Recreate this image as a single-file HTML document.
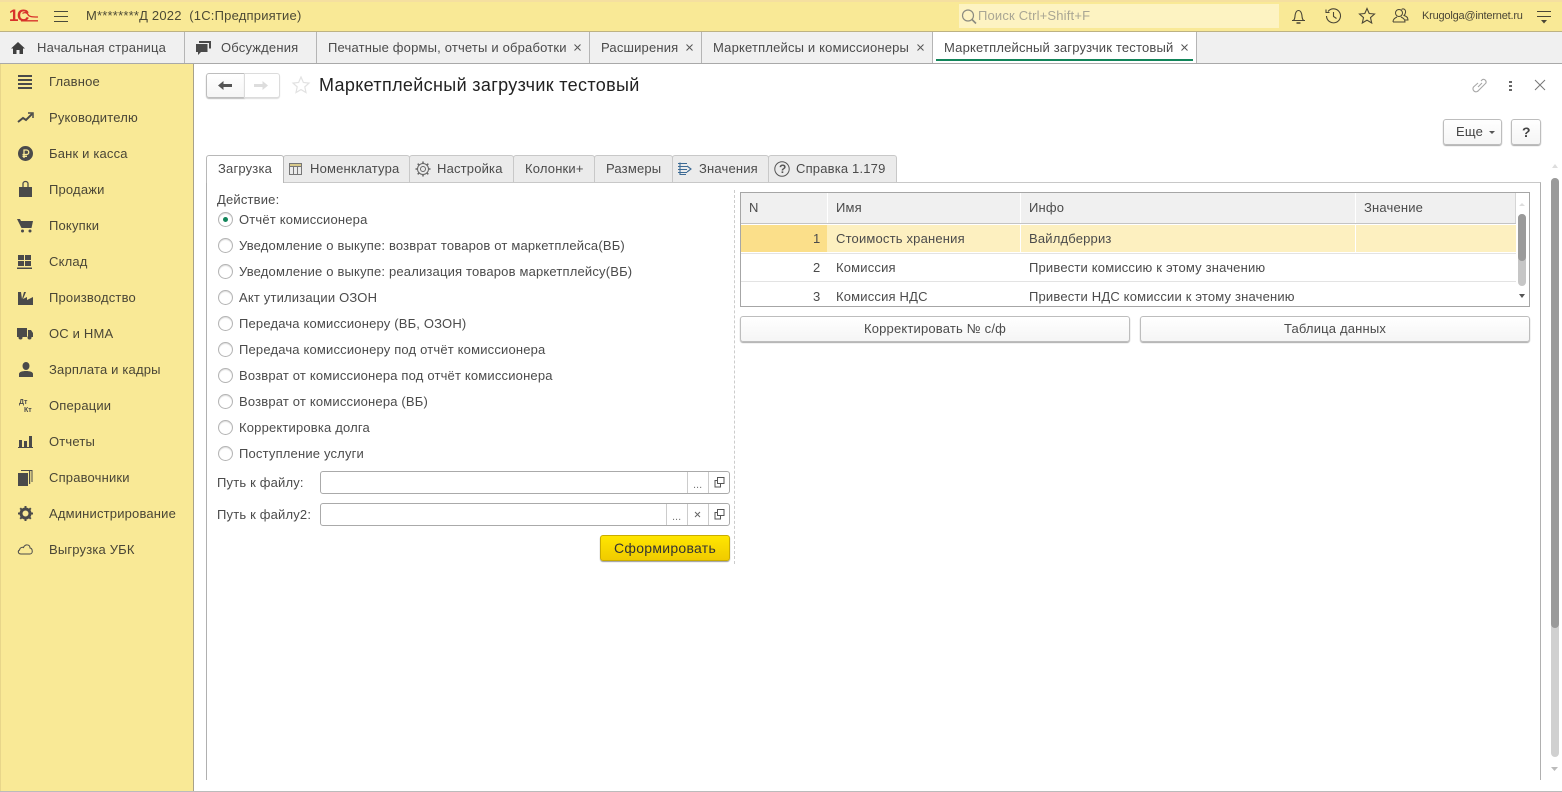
<!DOCTYPE html>
<html><head><meta charset="utf-8">
<style>
html,body{margin:0;padding:0;width:1562px;height:792px;overflow:hidden;background:#fff}
body{position:relative;font-family:"Liberation Sans",sans-serif;font-size:13px;color:#4b4b4b}
.a{position:absolute}
.t{position:absolute;white-space:nowrap;line-height:16px;letter-spacing:.18px}
.b{position:absolute;box-sizing:border-box;border:1px solid #bdbdbd;border-radius:3px;background:linear-gradient(#fff,#f5f5f5);box-shadow:0 1px 1px #aaa}
svg{position:absolute;overflow:visible}
.tab{position:absolute;top:155px;height:27px;box-sizing:border-box;background:#ebebeb;border:1px solid #c8c8c8;border-bottom:none;border-radius:3px 3px 0 0}
.r{position:absolute;left:218px;width:13px;height:13px;border:1px solid #b4b4b4;border-radius:50%;background:#fff;box-shadow:inset 0 1px 1px #ddd}
.vl{position:absolute;width:1px;background:#c9c9c9}
.hl{position:absolute;height:1px;background:#e3e3e3}
</style></head><body>
<!-- top bar -->
<div class="a" style="left:0;top:0;width:1562px;height:32px;background:#f9e996;border-top:2px solid #f5dfa0;box-sizing:border-box;border-bottom:1px solid #bdb283"></div>
<div class="t" style="left:9px;top:6px;font-size:17px;font-weight:bold;color:#d8322a;letter-spacing:-1.500px;line-height:20px">1С</div>
<svg style="left:0;top:0" width="40" height="24" fill="none" stroke="#d8322a" stroke-width="1.300"><path d="M22.500 13.500c2-1.500 4.500-1 5.500 1 .8 2 3 2.500 10 2.500"/><path d="M21 20.800h17"/></svg>
<div class="a" style="left:54px;top:11px;width:14px;height:1px;background:#4a4a3a"></div>
<div class="a" style="left:54px;top:16px;width:14px;height:1px;background:#4a4a3a"></div>
<div class="a" style="left:54px;top:21px;width:14px;height:1px;background:#4a4a3a"></div>
<div class="t" style="left:86px;top:8px;letter-spacing:.2px;color:#4d4a35">М********Д 2022&nbsp; (1С:Предприятие)</div>
<div class="a" style="left:959px;top:4px;width:320px;height:24px;background:#fdf3c2"></div>
<svg style="left:961px;top:9px" width="16" height="16" fill="none" stroke="#8b8b80" stroke-width="1.2"><circle cx="7" cy="6.5" r="5.5"/><path d="M11 10.5l4 4" stroke-width="1.6"/></svg>
<div class="t" style="left:978px;top:8px;color:#a9a694">Поиск Ctrl+Shift+F</div>
<svg style="left:1290px;top:7px" width="18" height="18" fill="none" stroke="#4a4636" stroke-width="1.1"><path d="M2 13.5h13M3.5 13.5c2-2 1-4 2-7 .6-2 2-3 3-3s2.400 1 3 3c1 3 0 5 2 7"/><path d="M6.500 16h4" stroke-width="1.500"/></svg>
<svg style="left:1325px;top:7px" width="18" height="18" fill="none" stroke="#4a4636" stroke-width="1.1"><path d="M3 4.500A7 7 0 1 1 1.500 9"/><path d="M1 2.500v3h3.500M8.500 5v4.500l3 2"/></svg>
<svg style="left:1358px;top:7px" width="18" height="18" fill="none" stroke="#4a4636" stroke-width="1.1"><path d="M9 1.500l2.200 5 5.300.500-4 3.600 1.200 5.400L9 13.200 4.300 16l1.200-5.400-4-3.600 5.300-.500z"/></svg>
<svg style="left:1392px;top:7px" width="18" height="18" fill="none" stroke="#4a4636" stroke-width="1"><circle cx="7" cy="6" r="3.500"/><path d="M1 15c0-3 2-4 4-5M9 10c2 1 4 2 4 5H1M9.500 2.500c2-1.500 4.500 0 4 3-.2 1.500-1 2.500-1.500 3 2 .5 4 2 4 4.500h-3"/></svg>
<div class="t" style="left:1422px;top:8px;font-size:11px;letter-spacing:-.2px;color:#4a4636">Krugolga@internet.ru</div>
<div class="a" style="left:1537px;top:11px;width:14px;height:1px;background:#4a4636"></div>
<div class="a" style="left:1537px;top:16px;width:14px;height:1px;background:#4a4636"></div>
<svg style="left:1541px;top:20px" width="6" height="4"><path d="M0 0h6L3 3.500z" fill="#4a4636"/></svg>
<!-- tabs bar -->
<div class="a" style="left:0;top:32px;width:1562px;height:32px;background:#f0f0f0;box-sizing:border-box;border-bottom:1px solid #a9a9a9"></div>
<div class="vl" style="left:184px;top:32px;height:31px;background:#b5b5b5"></div>
<div class="vl" style="left:316px;top:32px;height:31px;background:#b5b5b5"></div>
<div class="vl" style="left:589px;top:32px;height:31px;background:#b5b5b5"></div>
<div class="vl" style="left:701px;top:32px;height:31px;background:#b5b5b5"></div>
<div class="vl" style="left:932px;top:32px;height:31px;background:#b5b5b5"></div>
<div class="vl" style="left:1196px;top:32px;height:31px;background:#b5b5b5"></div>
<div class="a" style="left:933px;top:32px;width:263px;height:31px;background:#fff"></div>
<div class="a" style="left:936px;top:59px;width:257px;height:2px;background:#12855a"></div>
<svg style="left:11px;top:41px" width="15" height="14"><path d="M7 1L0 7.500h2V13h3.500V9h3v4H12V7.500h2z" fill="#3f3f3f"/></svg>
<div class="t" style="left:37px;top:40px">Начальная страница</div>
<svg style="left:195px;top:40px" width="17" height="16"><path d="M4 1h12v7.500h-2V3H4z" fill="#4a4a4a"/><path d="M1 4h11.500v8H6l-3 3v-3H1z" fill="#4a4a4a"/></svg>
<div class="t" style="left:221px;top:40px">Обсуждения</div>
<div class="t" style="left:328px;top:40px">Печатные формы, отчеты и обработки</div>
<div class="t" style="left:601px;top:40px">Расширения</div>
<div class="t" style="left:713px;top:40px">Маркетплейсы и комиссионеры</div>
<div class="t" style="left:944px;top:40px">Маркетплейсный загрузчик тестовый</div>
<svg style="left:574px;top:44px" width="8" height="8" stroke="#555" fill="none"><path d="M.5.5l6 6m0-6l-6 6"/></svg>
<svg style="left:686px;top:44px" width="8" height="8" stroke="#555" fill="none"><path d="M.5.5l6 6m0-6l-6 6"/></svg>
<svg style="left:917px;top:44px" width="8" height="8" stroke="#555" fill="none"><path d="M.5.5l6 6m0-6l-6 6"/></svg>
<svg style="left:1181px;top:44px" width="8" height="8" stroke="#555" fill="none"><path d="M.5.5l6 6m0-6l-6 6"/></svg>
<!-- sidebar -->
<div class="a" style="left:0;top:64px;width:194px;height:728px;background:#f9e996;box-sizing:border-box;border-right:1px solid #a8a28a;border-left:1px solid #e8d68a"></div>
<div class="t" style="left:49px;top:74px;color:#4a4636">Главное</div>
<div class="t" style="left:49px;top:110px;color:#4a4636">Руководителю</div>
<div class="t" style="left:49px;top:146px;color:#4a4636">Банк и касса</div>
<div class="t" style="left:49px;top:182px;color:#4a4636">Продажи</div>
<div class="t" style="left:49px;top:218px;color:#4a4636">Покупки</div>
<div class="t" style="left:49px;top:254px;color:#4a4636">Склад</div>
<div class="t" style="left:49px;top:290px;color:#4a4636">Производство</div>
<div class="t" style="left:49px;top:326px;color:#4a4636">ОС и НМА</div>
<div class="t" style="left:49px;top:362px;color:#4a4636">Зарплата и кадры</div>
<div class="t" style="left:49px;top:398px;color:#4a4636">Операции</div>
<div class="t" style="left:49px;top:434px;color:#4a4636">Отчеты</div>
<div class="t" style="left:49px;top:470px;color:#4a4636">Справочники</div>
<div class="t" style="left:49px;top:506px;color:#4a4636">Администрирование</div>
<div class="t" style="left:49px;top:542px;color:#4a4636">Выгрузка УБК</div>
<svg style="left:17px;top:74px" width="16" height="16" fill="#4a4a4a"><path d="M1 1h14v2H1zM1 5h14v2H1zM1 9h14v2H1zM1 13h14v2H1z"/></svg>
<svg style="left:17px;top:112px" width="17" height="12" fill="none" stroke="#4a4a4a" stroke-width="2"><path d="M1 10l5-4 3 2 6-6"/><path d="M11 1h5v5" stroke-width="1.500"/></svg>
<svg style="left:18px;top:146px" width="15" height="15"><circle cx="7.500" cy="7.500" r="7.500" fill="#4a4a4a"/><path d="M6 12V4h2.500a2 2 0 0 1 0 4.500H4.500M4.500 10.300H9" stroke="#f9e996" stroke-width="1.300" fill="none"/></svg>
<svg style="left:19px;top:181px" width="13" height="16"><path d="M0 6h13v10H0z" fill="#4a4a4a"/><path d="M4 7V2.500a2.500 2 0 0 1 5 0V7" fill="none" stroke="#4a4a4a" stroke-width="1.300"/></svg>
<svg style="left:17px;top:219px" width="16" height="14" fill="#4a4a4a"><path d="M0 0h3l1 2h12l-1.500 7H4.500z"/><circle cx="5.500" cy="12" r="1.500"/><circle cx="13" cy="12" r="1.500"/></svg>
<svg style="left:17px;top:255px" width="15" height="14" fill="#4a4a4a"><path d="M1 0h6v5H1zM8 0h6v5H8zM1 6h6v5H1zM8 6h6v5H8zM0 12.500h15V14H0z"/></svg>
<svg style="left:18px;top:291px" width="15" height="14" fill="#4a4a4a"><path d="M0 14V1l3 0 1 7 2-7 2 0-3 7 4-2v3l6-3v8z"/></svg>
<svg style="left:17px;top:328px" width="16" height="12" fill="#4a4a4a"><path d="M0 0h10v9H0zM11 2h3l2 3v4h-5z"/><circle cx="3.500" cy="9.500" r="2"/><circle cx="12.500" cy="9.500" r="2"/></svg>
<svg style="left:19px;top:362px" width="14" height="15" fill="#4a4a4a"><ellipse cx="7" cy="4" rx="3.500" ry="4"/><path d="M0 15v-3c0-2 3-3 7-3s7 1 7 3v3z"/></svg>
<div class="t" style="left:19px;top:399px;font-size:7px;font-weight:bold;line-height:8px;letter-spacing:0;color:#4a4a4a">Дт</div>
<div class="t" style="left:24px;top:407px;font-size:7px;font-weight:bold;line-height:8px;letter-spacing:0;color:#4a4a4a">Кт</div>
<svg style="left:18px;top:436px" width="15" height="12" fill="#4a4a4a"><path d="M1 4h3v7H1zM6 5h3v6H6zM11 0h3v11h-3zM0 11h15v1H0z"/></svg>
<svg style="left:18px;top:470px" width="15" height="16" fill="#4a4a4a"><path d="M0 3h10v13H0zM11 1h1.200v13H11zM3 0h11v1H3zM13.500 0h1v12h-1z"/></svg>
<svg style="left:18px;top:506px" width="15" height="15"><circle cx="7.500" cy="7.500" r="4.500" fill="none" stroke="#4a4a4a" stroke-width="3"/><path d="M7.500 0v15M0 7.500h15M2.200 2.200l10.600 10.600M12.800 2.200L2.200 12.800" stroke="#4a4a4a" stroke-width="2" stroke-dasharray="3 9"/></svg>
<svg style="left:17px;top:543px" width="17" height="12" fill="none" stroke="#4a4a4a" stroke-width="1"><path d="M4 11C1 11 .5 8 2.500 7 3 4 6 4 6.500 4.500 8 1 13 1 13 5c3 .5 3 6 0 6z"/></svg>
<!-- header -->
<div class="b" style="left:206px;top:73px;width:39px;height:25px;border-radius:3px 0 0 3px;box-shadow:0 1px 1px #bbb"></div>
<div class="b" style="left:244px;top:73px;width:36px;height:25px;border-radius:0 3px 3px 0;border-color:#dcdcdc;box-shadow:0 1px 1px #ddd;background:#fff"></div>
<svg style="left:218px;top:80px" width="15" height="11" fill="#555"><path d="M0 5.500L5.500 1v3H14v3H5.500v3z"/></svg>
<svg style="left:254px;top:80px" width="15" height="11" fill="#ddd"><path d="M14 5.500L8.500 1v3H0v3h8.500v3z"/></svg>
<svg style="left:292px;top:76px" width="18" height="18" fill="none" stroke="#e2e2e2" stroke-width="1.200"><path d="M9 1l2.400 5.500 5.600.600-4.200 3.800 1.200 5.600L9 13.600 4 16.500l1.200-5.600L1 7.100l5.600-.600z"/></svg>
<div class="t" style="left:319px;top:74px;font-size:18px;line-height:22px;letter-spacing:.34px;color:#222">Маркетплейсный загрузчик тестовый</div>
<svg style="left:1471px;top:77px" width="17" height="17" fill="none" stroke="#a8a8a8" stroke-width="1.100"><path d="M10 4l1.500-1.500a2.800 2.800 0 0 1 3.500 3.500l-7.500 7.500a2.800 2.800 0 0 1-5-3.500L7 6M11 6l-4 4"/></svg>
<div class="a" style="left:1509px;top:81px;width:3px;height:2px;background:#666"></div>
<div class="a" style="left:1509px;top:85px;width:3px;height:2px;background:#666"></div>
<div class="a" style="left:1509px;top:89px;width:3px;height:2px;background:#666"></div>
<svg style="left:1534px;top:79px" width="12" height="12" stroke="#777" fill="none"><path d="M1 1l10 10m0-10L1 11"/></svg>
<div class="b" style="left:1443px;top:119px;width:59px;height:26px"></div>
<div class="t" style="left:1456px;top:124px;color:#444">Еще</div>
<svg style="left:1489px;top:131px" width="6" height="3"><path d="M0 0h6L3 3z" fill="#555"/></svg>
<div class="b" style="left:1511px;top:119px;width:30px;height:26px"></div>
<div class="t" style="left:1522px;top:124px;font-weight:bold;font-size:14px;color:#444">?</div>
<!-- page scrollbar -->
<svg style="left:1551px;top:163px" width="9" height="6"><path d="M1 5h6L4 1z" fill="#ddd"/></svg>
<div class="a" style="left:1551px;top:178px;width:8px;height:579px;background:#d0d0d0;border-radius:4px"></div>
<div class="a" style="left:1551px;top:178px;width:8px;height:450px;background:#9a9a9a;border-radius:4px"></div>
<svg style="left:1550px;top:766px" width="9" height="6"><path d="M1 1h7L4.500 5z" fill="#bbb"/></svg>
<!-- form tabs -->
<div class="a" style="left:206px;top:182px;width:1335px;height:598px;box-sizing:border-box;border:1px solid #b0b0b0;border-top-color:#c8c8c8;border-bottom:none;background:#fff"></div>
<div class="tab" style="left:283px;width:127px"></div>
<div class="tab" style="left:409px;width:105px"></div>
<div class="tab" style="left:513px;width:82px"></div>
<div class="tab" style="left:594px;width:79px"></div>
<div class="tab" style="left:672px;width:97px"></div>
<div class="tab" style="left:768px;width:129px"></div>
<div class="a" style="left:206px;top:155px;width:78px;height:28px;box-sizing:border-box;background:#fff;border:1px solid #b8b8b8;border-bottom:none;border-radius:3px 3px 0 0"></div>
<div class="t" style="left:218px;top:161px">Загрузка</div>
<svg style="left:289px;top:163px" width="13" height="12" fill="none" stroke="#777"><path d="M.5.500h12v11H.5zM.5 3.500h12M4.500 3.500v8M8.500 3.500v8"/><path d="M.5.500h12v3H.5z" fill="#d8c98a"/></svg>
<div class="t" style="left:310px;top:161px">Номенклатура</div>
<svg style="left:415px;top:161px" width="16" height="16"><circle cx="8" cy="8" r="2.500" fill="none" stroke="#666"/><circle cx="8" cy="8" r="5.500" fill="none" stroke="#666"/><path d="M8 .5v15M.5 8h15M2.700 2.700l10.600 10.600M13.300 2.700L2.700 13.300" stroke="#666" stroke-width="1.500" stroke-dasharray="2.500 10"/></svg>
<div class="t" style="left:437px;top:161px">Настройка</div>
<div class="t" style="left:525px;top:161px">Колонки+</div>
<div class="t" style="left:606px;top:161px">Размеры</div>
<svg style="left:677px;top:162px" width="16" height="14" fill="none" stroke="#3c6a94"><path d="M1 1.500h9M1 4.500h9M1 7.500h9M1 10.500h9M10 4l4 3-4 3M3 .5v12h6" stroke-width="1.100"/></svg>
<div class="t" style="left:699px;top:161px">Значения</div>
<svg style="left:774px;top:161px" width="16" height="16" fill="none" stroke="#555"><circle cx="8" cy="8" r="7.200"/></svg>
<div class="t" style="left:779px;top:161px;font-size:12px;font-weight:bold;color:#555;letter-spacing:0">?</div>
<div class="t" style="left:796px;top:161px">Справка 1.179</div>
<!-- left form -->
<div class="t" style="left:217px;top:192px">Действие:</div>
<div class="r" style="top:212px"></div>
<div class="a" style="left:223px;top:217px;width:5px;height:5px;border-radius:50%;background:#12855a"></div>
<div class="t" style="left:239px;top:212px">Отчёт комиссионера</div>
<div class="r" style="top:238px"></div><div class="t" style="left:239px;top:238px">Уведомление о выкупе: возврат товаров от маркетплейса(ВБ)</div>
<div class="r" style="top:264px"></div><div class="t" style="left:239px;top:264px">Уведомление о выкупе: реализация товаров маркетплейсу(ВБ)</div>
<div class="r" style="top:290px"></div><div class="t" style="left:239px;top:290px">Акт утилизации ОЗОН</div>
<div class="r" style="top:316px"></div><div class="t" style="left:239px;top:316px">Передача комиссионеру (ВБ, ОЗОН)</div>
<div class="r" style="top:342px"></div><div class="t" style="left:239px;top:342px">Передача комиссионеру под отчёт комиссионера</div>
<div class="r" style="top:368px"></div><div class="t" style="left:239px;top:368px">Возврат от комиссионера под отчёт комиссионера</div>
<div class="r" style="top:394px"></div><div class="t" style="left:239px;top:394px">Возврат от комиссионера (ВБ)</div>
<div class="r" style="top:420px"></div><div class="t" style="left:239px;top:420px">Корректировка долга</div>
<div class="r" style="top:446px"></div><div class="t" style="left:239px;top:446px">Поступление услуги</div>
<div class="t" style="left:217px;top:475px">Путь к файлу:</div>
<div class="a" style="left:320px;top:471px;width:410px;height:23px;box-sizing:border-box;border:1px solid #aaa;border-radius:3px;background:#fff"></div>
<div class="vl" style="left:687px;top:472px;height:21px;background:#ccc"></div>
<div class="vl" style="left:708px;top:472px;height:21px;background:#ccc"></div>
<div class="t" style="left:693px;top:477px;color:#777;font-size:11px;letter-spacing:0">...</div>
<svg style="left:714px;top:477px" width="11" height="11" fill="none" stroke="#555"><path d="M3.500.5h6.500v6H3.500zM3.500 3.500H1v6.500h5.500V7"/></svg>
<div class="t" style="left:217px;top:507px">Путь к файлу2:</div>
<div class="a" style="left:320px;top:503px;width:410px;height:23px;box-sizing:border-box;border:1px solid #aaa;border-radius:3px;background:#fff"></div>
<div class="vl" style="left:666px;top:504px;height:21px;background:#ccc"></div>
<div class="vl" style="left:687px;top:504px;height:21px;background:#ccc"></div>
<div class="vl" style="left:708px;top:504px;height:21px;background:#ccc"></div>
<div class="t" style="left:672px;top:509px;color:#777;font-size:11px;letter-spacing:0">...</div>
<svg style="left:694px;top:511px" width="7" height="7" stroke="#666" fill="none"><path d="M1 1l5 5m0-5L1 6"/></svg>
<svg style="left:714px;top:509px" width="11" height="11" fill="none" stroke="#555"><path d="M3.500.5h6.500v6H3.500zM3.500 3.500H1v6.500h5.500V7"/></svg>
<div class="a" style="left:600px;top:535px;width:130px;height:26px;box-sizing:border-box;border:1px solid #c9ac00;border-radius:3px;background:linear-gradient(#ffe600,#f0cb00);box-shadow:0 1px 1px #999"></div>
<div class="t" style="left:614px;top:540px;color:#333;font-size:14px;letter-spacing:.28px">Сформировать</div>
<div class="a" style="left:734px;top:190px;height:374px;border-left:1px dashed #ccc"></div>
<!-- table -->
<div class="a" style="left:740px;top:192px;width:790px;height:115px;box-sizing:border-box;border:1px solid #a6a6a6;background:#fff"></div>
<div class="a" style="left:741px;top:193px;width:775px;height:30px;background:#f0f0f0"></div>
<div class="vl" style="left:827px;top:193px;height:30px;background:#fff"></div>
<div class="vl" style="left:1020px;top:193px;height:30px;background:#fff"></div>
<div class="vl" style="left:1355px;top:193px;height:30px;background:#fff"></div>
<div class="vl" style="left:1515px;top:193px;height:30px;background:#d5d5d5"></div>
<div class="a" style="left:741px;top:223px;width:775px;height:1px;background:#c4c4c4"></div>
<div class="a" style="left:741px;top:225px;width:775px;height:27px;background:#fdf0c0"></div>
<div class="a" style="left:741px;top:225px;width:86px;height:27px;background:#fbdf8a"></div>
<div class="vl" style="left:1020px;top:225px;height:27px;background:#fff"></div>
<div class="vl" style="left:1355px;top:225px;height:27px;background:#fff"></div>
<div class="hl" style="left:741px;top:253px;width:775px"></div>
<div class="hl" style="left:741px;top:281px;width:775px"></div>
<div class="t" style="left:749px;top:200px">N</div>
<div class="t" style="left:836px;top:200px">Имя</div>
<div class="t" style="left:1029px;top:200px">Инфо</div>
<div class="t" style="left:1364px;top:200px">Значение</div>
<div class="t" style="left:813px;top:231px">1</div>
<div class="t" style="left:836px;top:231px">Стоимость хранения</div>
<div class="t" style="left:1029px;top:231px">Вайлдберриз</div>
<div class="t" style="left:813px;top:260px">2</div>
<div class="t" style="left:836px;top:260px">Комиссия</div>
<div class="t" style="left:1029px;top:260px">Привести комиссию к этому значению</div>
<div class="t" style="left:813px;top:289px">3</div>
<div class="t" style="left:836px;top:289px">Комиссия НДС</div>
<div class="t" style="left:1029px;top:289px">Привести НДС комиссии к этому значению</div>
<svg style="left:1518px;top:202px" width="8" height="5"><path d="M1 4h6L4 1z" fill="#ddd"/></svg>
<div class="a" style="left:1518px;top:214px;width:8px;height:72px;background:#c6c6c6;border-radius:4px"></div>
<div class="a" style="left:1518px;top:214px;width:8px;height:47px;background:#9a9a9a;border-radius:4px"></div>
<svg style="left:1518px;top:294px" width="8" height="5"><path d="M1 0h6L4 4z" fill="#555"/></svg>
<div class="b" style="left:740px;top:316px;width:390px;height:26px"></div>
<div class="b" style="left:1140px;top:316px;width:390px;height:26px"></div>
<div class="t" style="left:740px;top:321px;width:390px;text-align:center">Корректировать № с/ф</div>
<div class="t" style="left:1140px;top:321px;width:390px;text-align:center">Таблица данных</div>
<div class="a" style="left:0;top:791px;width:1562px;height:1px;background:#bbb"></div>
</body></html>
